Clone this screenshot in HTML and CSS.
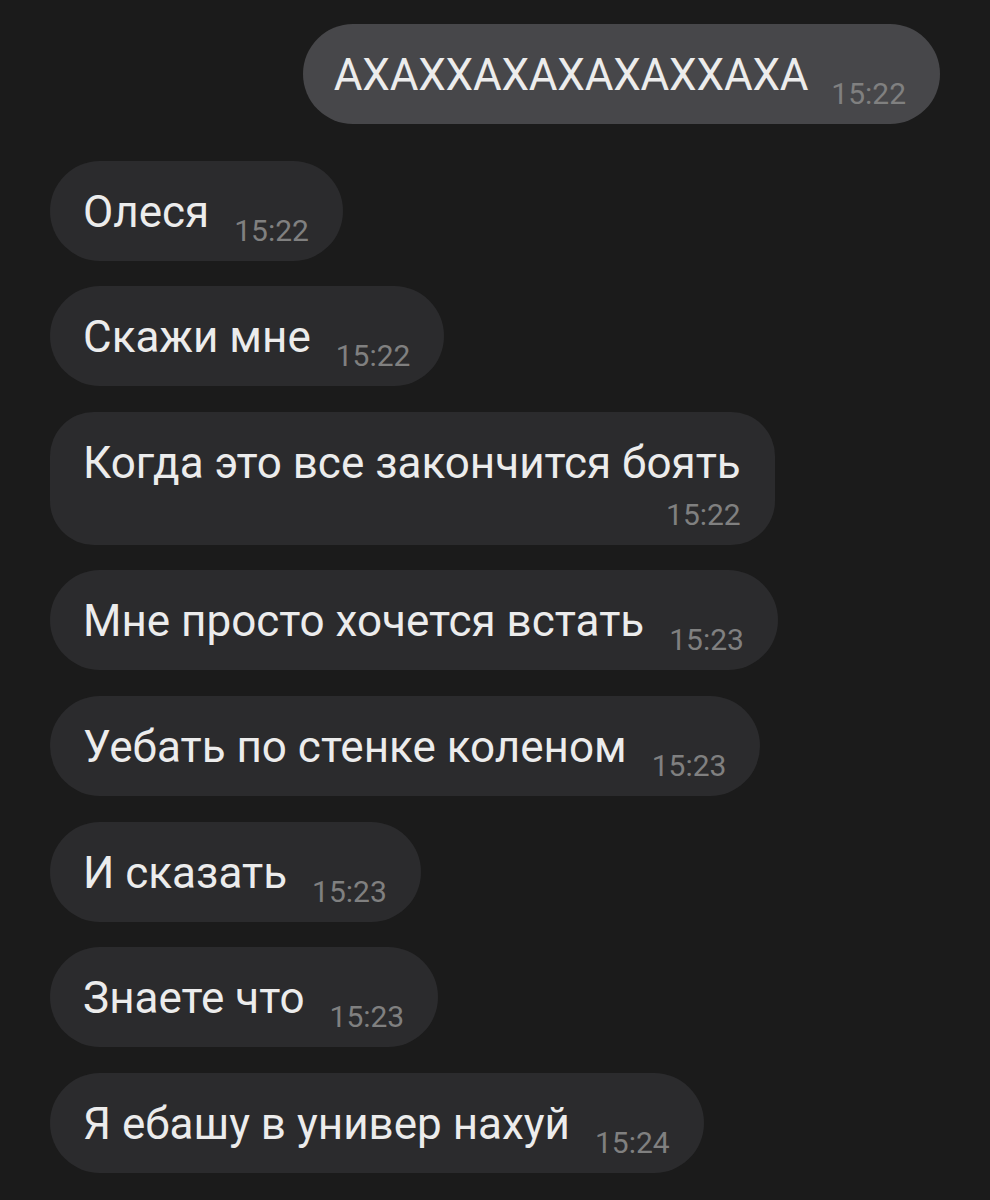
FILE: index.html
```html
<!DOCTYPE html>
<html lang="ru">
<head>
    <meta charset="UTF-8">
    <meta name="viewport" content="width=device-width, initial-scale=1.0">
    <title>Чат</title>
    <link rel="stylesheet" href="styles.css">
</head>
<body>
    <div class="chat">
        <!-- исходящее -->
        <div class="msg msg-out">
            <span class="text">АХАХХАХАХАХАХХАХА</span>
            <span class="time">15:22</span>
        </div>

        <!-- входящие -->
        <div class="msg">
            <span class="text">Олеся</span>
            <span class="time">15:22</span>
        </div>
        <div class="msg">
            <span class="text">Скажи мне</span>
            <span class="time">15:22</span>
        </div>
        <div class="msg msg-wrap">
            <span class="text">Когда это все закончится боять</span>
            <span class="time">15:22</span>
        </div>
        <div class="msg">
            <span class="text">Мне просто хочется встать</span>
            <span class="time">15:23</span>
        </div>
        <div class="msg">
            <span class="text">Уебать по стенке коленом</span>
            <span class="time">15:23</span>
        </div>
        <div class="msg">
            <span class="text">И сказать</span>
            <span class="time">15:23</span>
        </div>
        <div class="msg">
            <span class="text">Знаете что</span>
            <span class="time">15:23</span>
        </div>
        <div class="msg">
            <span class="text">Я ебашу в универ нахуй</span>
            <span class="time">15:24</span>
        </div>
    </div>
</body>
</html>
```

FILE: styles.css
```css
body {
    font-family: Roboto, "Noto Sans", Arial, sans-serif;
    background-color: #1b1b1b;
    margin: 0;
    padding: 0;
}

.chat {
    display: flex;
    flex-direction: column;
    align-items: flex-start;
    gap: 25.6px;
    padding: 24px 50px 0 50px;
}

.msg {
    display: flex;
    align-items: flex-start;
    gap: 25px;
    background-color: #2b2b2d;
    border-radius: 50px;
    padding: 26px 34px 12px 33px;
    color: #ececec;
}

.msg-out {
    align-self: flex-end;
    background-color: #47474a;
    margin-bottom: 11px;
    padding-left: 31px;
    gap: 23px;
}

.msg-out .text {
    letter-spacing: -0.2px;
}

.msg-wrap {
    flex-direction: column;
    align-items: flex-end;
    gap: 0;
    border-radius: 44px;
}

.text {
    font-size: 44px;
    line-height: 50px;
    white-space: nowrap;
}

.time {
    font-size: 30px;
    line-height: 36px;
    color: #808080;
    margin-top: 26px;
}

.msg-wrap .time {
    margin-top: 9px;
}
```
